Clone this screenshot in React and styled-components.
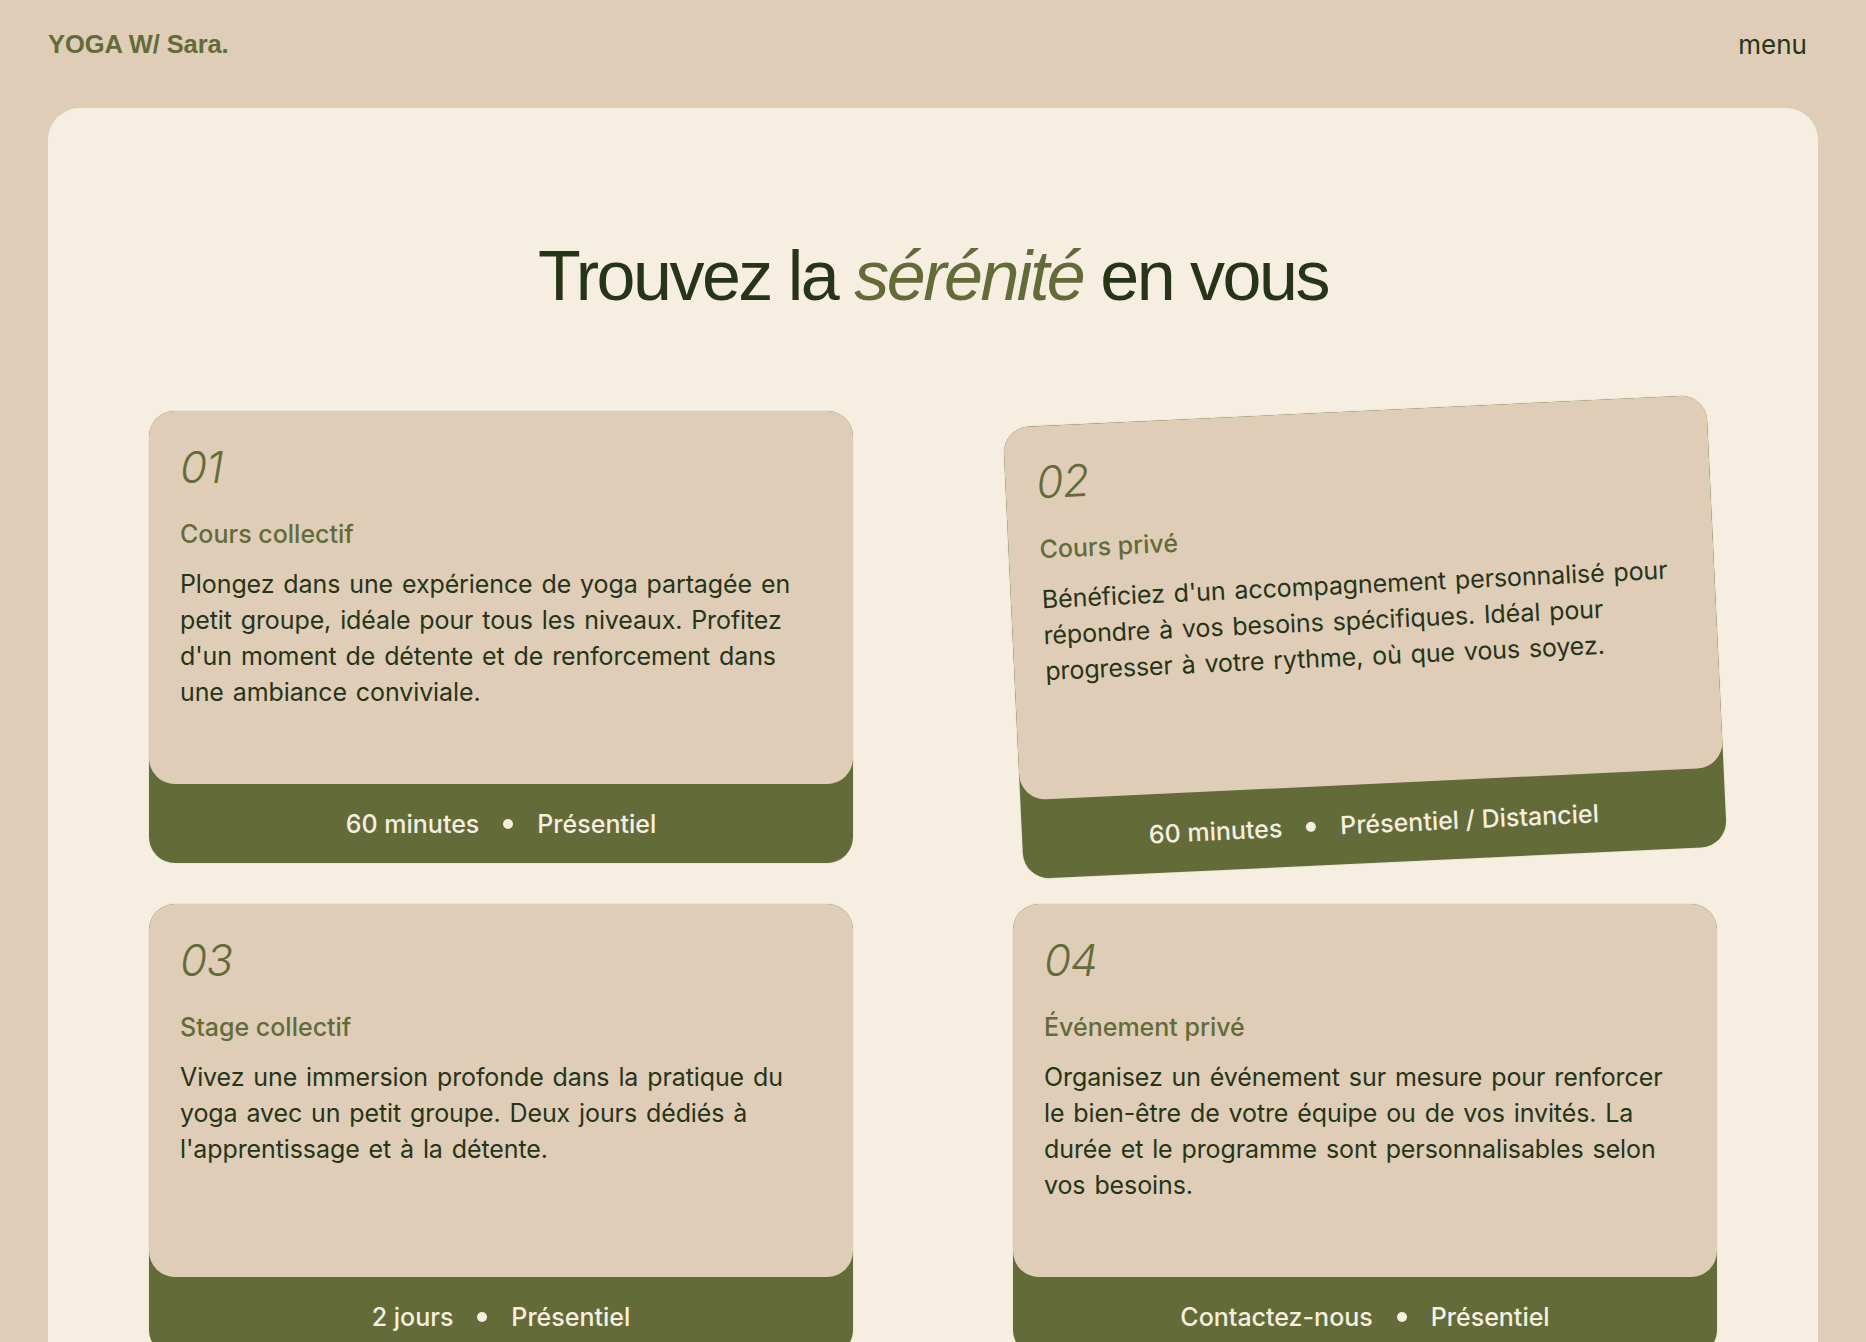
import React from 'react'
import styled, { createGlobalStyle } from 'styled-components'

const colors = {
  sand: '#dfcdb8',
  cream: '#f6eee0',
  olive: '#636c38',
  forest: '#263418',
}

const GlobalStyle = createGlobalStyle`
  html, body {
    margin: 0;
    padding: 0;
    background: ${colors.sand};
  }
  * {
    box-sizing: border-box;
  }
`

const Page = styled.div`
  min-height: 100vh;
  background: ${colors.sand};
  padding: 0 48px;
  font-family: Inter, "Noto Sans", sans-serif;
`

const Header = styled.header`
  display: flex;
  justify-content: space-between;
  align-items: center;
  height: 88px;
`

const Logo = styled.a`
  font-family: "Liberation Sans", Arial, sans-serif;
  font-weight: 700;
  font-size: 25.5px;
  letter-spacing: -0.1px;
  color: ${colors.olive};
  text-decoration: none;
`

const MenuButton = styled.button`
  background: none;
  border: 0;
  padding: 0 11px 0 0;
  font-family: Inter, sans-serif;
  font-size: 26px;
  color: ${colors.forest};
  cursor: pointer;
`

const Panel = styled.main`
  background: ${colors.cream};
  border-radius: 32px 32px 0 0;
  margin-top: 20px;
  padding: 126px 101px 80px;
`

const Heading = styled.h1`
  margin: 0;
  text-align: center;
  font-family: "Liberation Sans", Arial, sans-serif;
  font-weight: 400;
  font-size: 70px;
  line-height: 1.2;
  letter-spacing: -2.5px;
  color: ${colors.forest};

  em {
    color: ${colors.olive};
  }
`

const Grid = styled.section`
  display: grid;
  grid-template-columns: 1fr 1fr;
  column-gap: 160px;
  row-gap: 41px;
  margin-top: 93px;
`

const Card = styled.article`
  background: ${colors.olive};
  border-radius: 26px;
  overflow: hidden;
  transform: rotate(${(p) => p.$tilt || 0}deg);
  transform-origin: center;
  box-shadow: 0 0 0 1px rgba(60, 50, 30, 0.04);
`

const CardBody = styled.div`
  background: ${colors.sand};
  border-radius: 0 0 26px 26px;
  min-height: 373px;
  padding: 30px 33px 30px 31px;
`

const Number = styled.div`
  font-size: 44px;
  font-weight: 300;
  font-style: italic;
  line-height: 1.2;
  letter-spacing: -1px;
  color: ${colors.olive};
`

const Title = styled.h2`
  margin: 24px 0 0;
  font-size: 25px;
  font-weight: 500;
  line-height: 1.3;
  color: ${colors.olive};
`

const Text = styled.p`
  margin: 16px 0 0;
  font-size: 25px;
  font-weight: 400;
  line-height: 36px;
  letter-spacing: -0.1px;
  word-spacing: 2px;
  color: ${colors.forest};
`

const CardFooter = styled.div`
  height: 79px;
  display: flex;
  justify-content: center;
  align-items: center;
  gap: 24px;
  font-size: 25px;
  font-weight: 500;
  color: ${colors.cream};
`

const Dot = styled.span`
  width: 10px;
  height: 10px;
  border-radius: 50%;
  background: ${colors.cream};
`

const offers = [
  {
    num: '01',
    title: 'Cours collectif',
    text: "Plongez dans une expérience de yoga partagée en petit groupe, idéale pour tous les niveaux. Profitez d'un moment de détente et de renforcement dans une ambiance conviviale.",
    duration: '60 minutes',
    place: 'Présentiel',
  },
  {
    num: '02',
    title: 'Cours privé',
    text: "Bénéficiez d'un accompagnement personnalisé pour répondre à vos besoins spécifiques. Idéal pour progresser à votre rythme, où que vous soyez.",
    duration: '60 minutes',
    place: 'Présentiel / Distanciel',
    tilt: -2.7,
  },
  {
    num: '03',
    title: 'Stage collectif',
    text: "Vivez une immersion profonde dans la pratique du yoga avec un petit groupe. Deux jours dédiés à l'apprentissage et à la détente.",
    duration: '2 jours',
    place: 'Présentiel',
  },
  {
    num: '04',
    title: 'Événement privé',
    text: 'Organisez un événement sur mesure pour renforcer le bien-être de votre équipe ou de vos invités. La durée et le programme sont personnalisables selon vos besoins.',
    duration: 'Contactez-nous',
    place: 'Présentiel',
  },
]

const OfferCard = ({ offer }) => (
  <Card $tilt={offer.tilt}>
    <CardBody>
      <Number>{offer.num}</Number>
      <Title>{offer.title}</Title>
      <Text>{offer.text}</Text>
    </CardBody>
    <CardFooter>
      <span>{offer.duration}</span>
      <Dot />
      <span>{offer.place}</span>
    </CardFooter>
  </Card>
)

export default function App() {
  return (
    <Page>
      <GlobalStyle />
      <Header>
        <Logo href="#">YOGA W/ Sara.</Logo>
        <MenuButton type="button">menu</MenuButton>
      </Header>
      <Panel>
        <Heading>
          Trouvez la <em>sérénité</em> en vous
        </Heading>
        <Grid>
          {offers.map((offer) => (
            <OfferCard key={offer.num} offer={offer} />
          ))}
        </Grid>
      </Panel>
    </Page>
  )
}
